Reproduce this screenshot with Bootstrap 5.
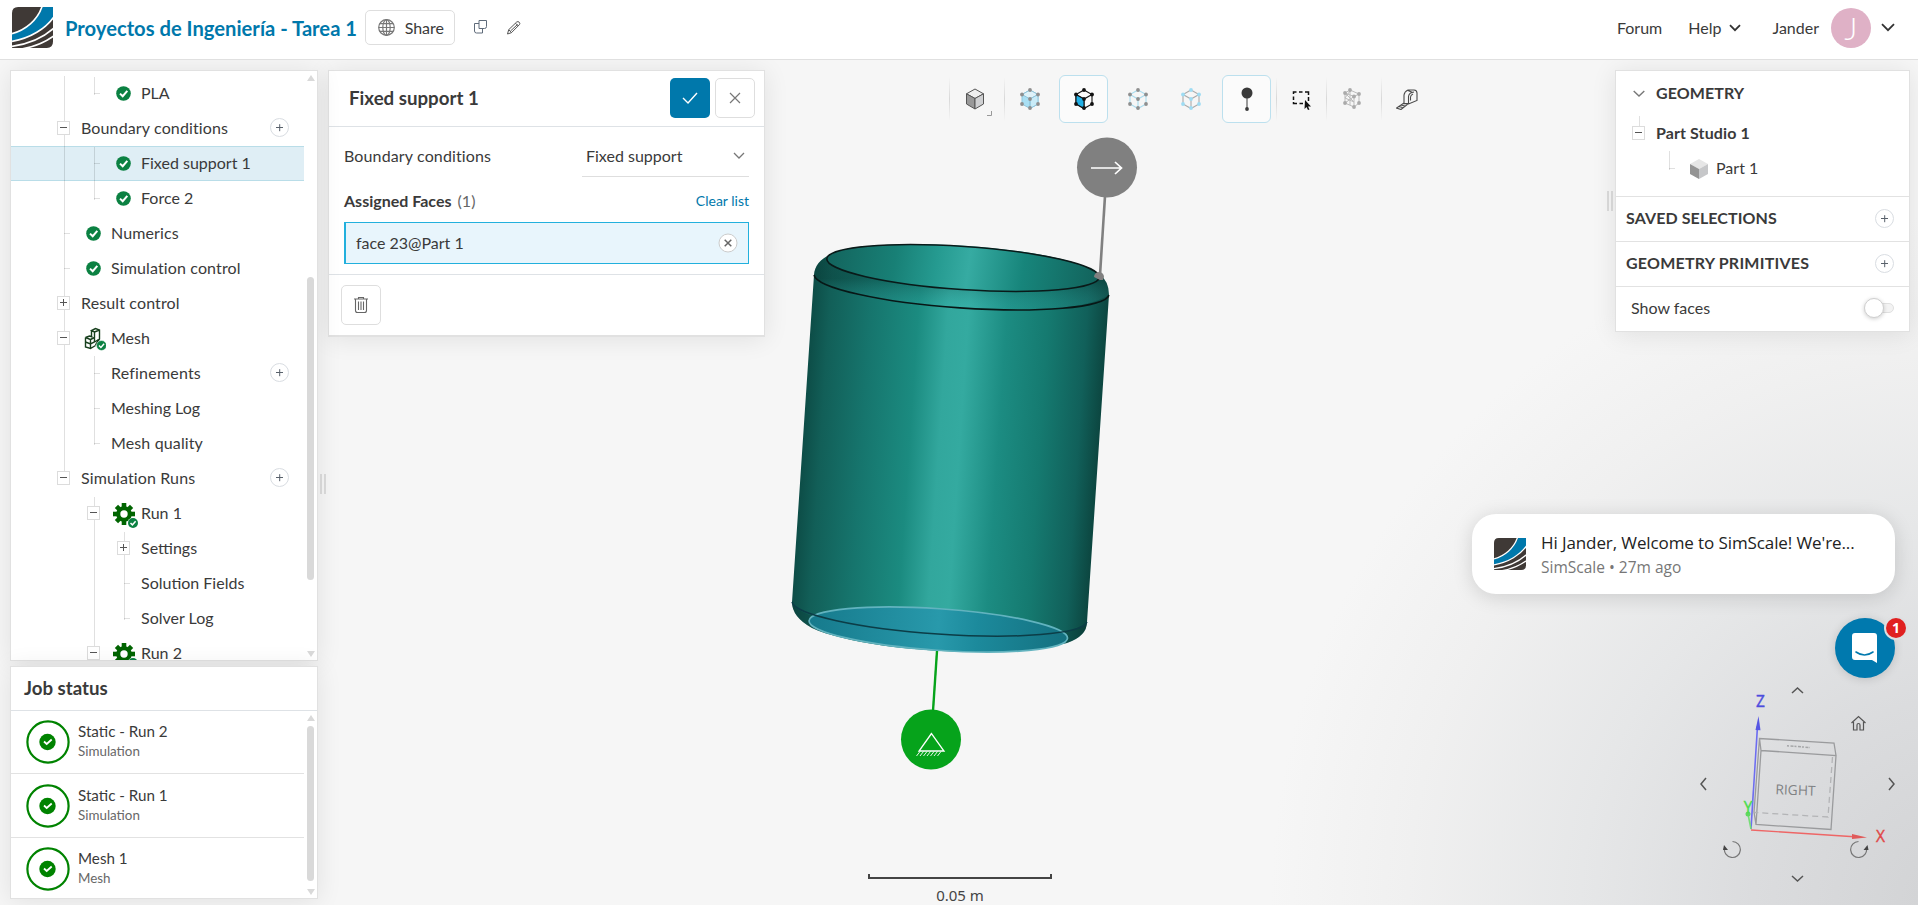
<!DOCTYPE html>
<html lang="es">
<head>
<meta charset="utf-8">
<meta name="viewport" content="width=device-width, initial-scale=1">
<title>Proyectos de Ingeniería - Tarea 1</title>
<link href="https://cdn.jsdelivr.net/npm/bootstrap@5.3.0/dist/css/bootstrap.min.css" rel="stylesheet">
<style>
:root{--ink:#3a3a3a;--line:#e2e2e2;--brand:#0078ab;--ok:#0b8142}
html,body{height:100%;overflow:hidden}
body{font-family:Lato,"Liberation Sans",sans-serif;font-size:16px;line-height:20px;color:var(--ink);background:#f6f6f6}
svg{display:block;flex:none}
.topbar{height:60px;border-bottom:1px solid #e0e0e0;background:#fff;padding:0 18px 4px 12px;position:relative;z-index:2}
.proj{font-size:20.2px;font-weight:700;color:var(--brand);margin-left:12px;width:289px;white-space:nowrap}
.btn-line{border:1px solid #dedede;border-radius:5px;background:#fff;color:var(--ink)}
.share{width:90px;height:35px;margin-left:11px;padding:0 10px 0 12px;font-size:16px}
.avatar{width:40px;height:40px;background:#dfb1c6;color:#fff;font-size:32px;font-weight:300}
.work{height:845px;padding:10px 8px 6px 10px;position:relative;isolation:isolate}
.scene{position:absolute;inset:0;z-index:-1}
.panel{background:#fff;border:1px solid #e1e1e1;box-shadow:0 2px 24px rgba(0,0,0,.09)}
.side{width:308px;gap:5px}
.tree{height:591px;overflow:hidden;padding-top:5px;position:relative}
.jobs{height:233px;position:relative}
.trow{height:35px;width:293px;padding-left:39px}
.trow.sel{background:#dfeef5;box-shadow:inset 0 1px #b9dde8,inset 0 -1px #b9dde8}
.c{width:30px;height:35px;flex:none;position:relative;display:flex;align-items:center;justify-content:center}
.c.v::before,.c.t::before,.c.l::before,.c.u::before{content:"";position:absolute;left:14px;top:0;bottom:0;width:1px;background:rgba(0,0,0,.12)}
.c.l::before{bottom:16px}.c.u::before{bottom:17px}
.c.first::before{top:1px}
.c.t::after,.c.l::after{content:"";position:absolute;left:14px;top:17px;width:6px;height:1px;background:rgba(0,0,0,.12)}
.c.ic{padding:0 4px 1px 0}
.tg{width:13px;height:14px;border:1px solid #dcdcdc;background:#fff;position:relative;margin:-1px 0 0 -3px;display:block}
.tg::before,.tg.plus::after{content:"";position:absolute;left:2px;top:5px;width:7px;height:1px;background:#555}
.tg.plus::after{transform:rotate(90deg)}
.gr{padding:4px 0 0 3px}
.lbl{padding:0 0 2px 1px;white-space:nowrap}
.wide{letter-spacing:.13px}
.add{width:19px;height:19px;border:1px solid #d9dde2;border-radius:50%;background:#fff;position:relative;flex:none}
.add::before,.add::after{content:"";position:absolute;left:5px;top:8px;width:7px;height:1.4px;background:#59616b}
.add::after{transform:rotate(90deg)}
.trow .add{margin:-2px 15px 0 auto}
.bar{position:absolute;width:7px;border-radius:4px;background:#d9d9d9;right:3px}
.arr{position:absolute;right:2px;border:4.5px solid transparent;width:0;height:0}
.arr.up{border-bottom:6px solid #d9d9d9;border-top:0}.arr.dn{border-top:6px solid #d9d9d9;border-bottom:0}
.grip{width:6px;height:20px;border:solid #dcdcdc;border-width:0 2px}
.h-panel{font-size:18.7px;font-weight:700}
.job{width:293px;height:64px;border-bottom:1px solid var(--line);padding-left:15px}
.job b{font-weight:400;display:block;font-size:15.2px;line-height:19px;margin-top:-1px}
.job small{display:block;font-size:13.4px;line-height:20px;color:#686868}
.props{width:437px;margin-left:2px;height:267px;border-bottom-width:2px}
.sq{width:40px;height:40px;padding:0;display:flex;align-items:center;justify-content:center}
.btn-go{background:var(--brand);border-radius:5px}
.face{height:42px;border:1px solid #22b0dd;border-left-width:2px;background:#e8f5fc;padding:0 10px 1px;font-size:16px}
.pick{width:167px;height:39px;border-bottom:1px solid #dedede;padding:0 4px 3px}
.tools{height:48px;margin-top:5px}
.tool{width:49px;height:48px;display:flex;align-items:center;justify-content:center;flex:none}
.tool.on{border:1px solid #bce0ee;border-radius:6px;background:#fbfbfb}
.sep{width:1px;height:44px;flex:none;background:linear-gradient(transparent,#d8d8d8 50%,transparent)}
.geo{width:295px;height:262px}
.geo .hd{font-weight:700;font-size:16px;letter-spacing:.1px}
.sect{height:45px;border-top:1px solid var(--line);padding:0 15px 2px 10px}
.toastbox{position:absolute;left:1472px;top:454px;width:423px;height:80px;border-radius:24px;background:#fff;box-shadow:0 3px 20px rgba(0,0,0,.14);padding-left:22px;font-family:"Open Sans","Noto Sans",sans-serif}
.toastbox .m1{font-size:17px;letter-spacing:-.1px;color:#222;line-height:24px;white-space:nowrap}
.toastbox .m2{font-size:15.5px;color:#777;line-height:25px}
.chat{position:absolute;left:1835px;top:558px;width:60px;height:60px;border-radius:50%;background:#0079ae;box-shadow:0 1px 10px rgba(0,0,0,.15)}
.chat span{position:absolute;left:51px;top:0;width:20px;height:20px;border-radius:50%;background:#e02020;color:#fff;font:700 14px/20px "Open Sans",sans-serif;text-align:center;box-shadow:0 0 0 2px #dedfe1}
.sw{width:30px;height:20px;position:relative}
.sw::before{content:"";position:absolute;left:10px;top:5px;width:20px;height:10px;border-radius:5px;background:#f3f3f3;border:1px solid #e0e0e0}
.sw::after{content:"";position:absolute;left:0;top:0;width:20px;height:20px;border-radius:50%;background:#fff;border:1px solid #cfcfcf;box-shadow:0 1px 4px rgba(0,0,0,.2)}
</style>
</head>
<body>
<svg width="0" height="0" class="position-absolute">
<defs>
<symbol id="logo" viewBox="0 0 40 40">
<clipPath id="lc"><path d="M6 0H40V34Q40 40 34 40H0V6Q0 0 6 0Z"/></clipPath>
<g clip-path="url(#lc)"><rect width="40" height="40" fill="#3f3936"/>
<path d="M0 26.5C13 23 25 13 30 0H40V11C32 21 18 30 0 33.5Z" fill="#0078ab"/>
<path d="M0 26C13 22.500 25 13 29.500-1M0 33.500C18 30.500 33 21 41 9.500M-1 38.500C16 36.500 31 29.500 41 20.500M9 41C21 39 32 34.500 41 28" fill="none" stroke="#fff" stroke-width="1.600"/></g>
</symbol>
<symbol id="ok" viewBox="0 0 15 15"><circle cx="7.500" cy="7.500" r="7.300" fill="#0b8142"/><path d="M4 7.600 6.700 10.200 11.300 4.900" fill="none" stroke="#fff" stroke-width="2"/></symbol>
<symbol id="gear" viewBox="0 0 28 26"><g fill="#006400"><circle cx="11" cy="11" r="7.800"/><rect x="8.700" y="0" width="4.600" height="22"/><rect x="0" y="8.700" width="22" height="4.600"/><g transform="rotate(45 11 11)"><rect x="8.700" y=".3" width="4.600" height="21.400"/><rect x=".3" y="8.700" width="21.400" height="4.600"/></g></g><circle cx="11" cy="11" r="3.700" fill="#fff"/><circle cx="20" cy="20" r="5.400" fill="#fff"/><circle cx="20" cy="20" r="5" fill="#0b8142"/><path d="m17.500 20 1.900 1.900 3.200-3.700" fill="none" stroke="#fff" stroke-width="1.500"/></symbol>
<symbol id="job" viewBox="0 0 44 44"><circle cx="22" cy="22" r="20.600" fill="none" stroke="#008300" stroke-width="2.200"/><circle cx="21.500" cy="22" r="8.200" fill="#008300"/><path d="m18 21.500 2.700 2.500 5-4.500" fill="none" stroke="#fff" stroke-width="1.800"/></symbol>
</defs></svg>

<nav class="topbar d-flex align-items-center">
  <svg width="41" height="41"><use href="#logo"/></svg>
  <div class="proj">Proyectos de Ingeniería - Tarea 1</div>
  <button class="btn-line share d-flex align-items-center justify-content-between">
    <svg width="17" height="17" viewBox="0 0 17 17" fill="none" stroke="#777" stroke-width="1.200"><circle cx="8.500" cy="8.500" r="7.800"/><ellipse cx="8.500" cy="8.500" rx="3.700" ry="7.800"/><path d="M8.500.7v15.600M.7 8.500h15.600M1.800 4.700h13.400M1.800 12.300h13.400"/></svg>Share</button>
  <svg class="ms-3" style="margin-top:-1px" width="18" height="16" viewBox="0 0 18 16" fill="#fff" stroke="#5f6b7a"><path d="M3.500 4.500h8v9.500h-6q-2 0-2-2z"/><path d="M8 1.500h7.500v6q0 2-2 2H8z" /></svg>
  <svg style="margin-left:17px" width="16" height="16" viewBox="0 0 16 16" fill="none" stroke="#555"><path d="m1.500 14 1.200-4.300 8-7.700q1.300-1 2.500.2t.2 2.500l-8 8zM2.800 9.700l2.700 3M9.500 3.200l2.700 2.700M4.500 11l7-6.500"/></svg>
  <div class="ms-auto d-flex align-items-center">
    <span>Forum</span>
    <span style="margin-left:26px">Help</span>
    <svg style="margin-left:8px" width="12" height="8" viewBox="0 0 12 8" fill="none" stroke="#333" stroke-width="1.800"><path d="m1 1.200 5 5 5-5"/></svg>
    <span style="margin-left:31px">Jander</span>
    <div class="avatar rounded-circle d-flex align-items-center justify-content-center" style="margin-left:12px">J</div>
    <svg style="margin:0 5px 0 10px" width="14" height="9" viewBox="0 0 14 9" fill="none" stroke="#333" stroke-width="1.800"><path d="m1 1.200 6 6 6-6"/></svg>
  </div>
</nav>

<main class="work d-flex align-items-start">
  <!-- 3D viewer: model, pins, ruler and orientation cube -->
  <svg class="scene" width="1918" height="845" viewBox="0 60 1918 845">
    <defs>
      <radialGradient id="bg" gradientUnits="userSpaceOnUse" cx="1960" cy="905" r="690">
        <stop offset="0" stop-color="#d1d2d4"/><stop offset=".3" stop-color="#dbdcde"/><stop offset=".55" stop-color="#e6e7e8"/><stop offset=".8" stop-color="#f0f0f0"/><stop offset="1" stop-color="#f6f6f6"/></radialGradient>
      <linearGradient id="body" gradientUnits="userSpaceOnUse" x1="803" y1="438" x2="1098" y2="458">
        <stop offset="0" stop-color="#0d4d47"/><stop offset=".06" stop-color="#125f58"/><stop offset=".2" stop-color="#16756d"/><stop offset=".36" stop-color="#1b8b80"/><stop offset=".46" stop-color="#32a79d"/><stop offset=".53" stop-color="#34aaa0"/><stop offset=".66" stop-color="#1c8c82"/><stop offset=".8" stop-color="#157a70"/><stop offset=".93" stop-color="#11605a"/><stop offset="1" stop-color="#0c4640"/></linearGradient>
      <linearGradient id="in" gradientUnits="userSpaceOnUse" x1="827" y1="258" x2="1099" y2="277">
        <stop offset="0" stop-color="#13645d"/><stop offset=".25" stop-color="#188076"/><stop offset=".4" stop-color="#259a90"/><stop offset=".52" stop-color="#36aba2"/><stop offset=".72" stop-color="#17857b"/><stop offset="1" stop-color="#12625b"/></linearGradient>
      <linearGradient id="shade" x1="0" y1="0" x2="0" y2="1"><stop offset="0" stop-color="#06302c" stop-opacity=".25"/><stop offset=".5" stop-color="#06302c" stop-opacity=".3"/><stop offset=".95" stop-color="#4cc" stop-opacity=".14"/></linearGradient>
      <linearGradient id="face" x1="0" y1="0" x2="1" y2="0"><stop offset="0" stop-color="#167a8c"/><stop offset=".5" stop-color="#2899ab"/><stop offset=".65" stop-color="#1c8a9c"/><stop offset="1" stop-color="#14707f"/></linearGradient>
    </defs>
    <rect y="60" width="1918" height="845" fill="url(#bg)"/>
    <path d="M814 275C815 260 830 250 863 246.500C950 238 1078 254 1099 274Q1109 281 1109 295L1087 622Q1087 636 1067 643C1000 661 860 650 812 628Q792 617 792 602Z" fill="url(#body)"/>
    <path d="M814 275C815 260 830 250 863 246.500L1099 274Q1109 281 1109 295C1080 313 1000 313 940 307C870 301 818 288 814 275Z" fill="url(#shade)"/>
    <path d="M792 602C796 622 900 636 990 637Q1070 638 1087 622Q1087 636 1067 643C1000 661 860 650 812 628Q792 617 792 602Z" fill="#06302c" opacity=".3"/>
    <ellipse cx="963" cy="268" rx="136.500" ry="21.600" transform="rotate(3.900 963 268)" fill="url(#in)" stroke="#0a1a19" stroke-width="1.600"/>
    <path d="M0 0A148 24 0 0 0 295.700 0" transform="translate(814 275) rotate(3.900)" fill="none" stroke="#081716" stroke-width="1.600"/>
    <ellipse cx="938.300" cy="629.500" rx="129.500" ry="20.800" transform="rotate(3.900 938.300 629.500)" fill="url(#face)" stroke="#62b3bf" stroke-width="1.700"/>
    <path d="M0 0A148 23 0 0 0 295.700 0" transform="translate(792 602) rotate(3.900)" fill="none" stroke="#0c3d47" stroke-width="1.500"/>
    <path d="M1105 196 1100 275" stroke="#808080" stroke-width="2.600"/><circle cx="1107" cy="167.500" r="30" fill="#808080"/><path d="M1094 277a5 5 0 0 1 10 0l-1 3h-3z" fill="#808080"/>
    <path d="M1091 168h30m-6-6 6.500 6-6.500 6" fill="none" stroke="#fff" stroke-width="1.700"/>
    <path d="M937 651 933 711" stroke="#06a31b" stroke-width="2.400"/><circle cx="931" cy="739.500" r="30" fill="#06a31b"/>
    <path d="m931.500 733.500-12.500 17.500h25z" fill="none" stroke="#fff" stroke-width="1.300"/><path d="m920 751.500-3.500 4.500m7-4.500-3.500 4.500m7-4.500-3.500 4.500m7-4.500-3.500 4.500m7-4.500-3.500 4.500m7-4.500-3.500 4.500m7-4.500-3.500 4.500" stroke="#fff" stroke-width=".9"/>
    <path d="M869 874v4h182v-4" fill="none" stroke="#444" stroke-width="2"/>
    <text x="960" y="901" text-anchor="middle" font-family="Noto Sans" font-size="15" fill="#444">0.05 m</text>
    <!-- orientation cube -->
    <g fill="none" stroke="#9a9b9d" stroke-width="1.300">
      <path d="M1761 750.500 1836 755.500 1831 829.500 1756 824.500ZM1761 750.500 1759.500 738.500 1834 743 1836 755.500M1759.500 738.500 1754 812 1756 824.500"/>
      <path d="M1832.500 757 1828 817 1755 812.500" stroke="#b3b4b6" stroke-dasharray="6 4"/></g>
    <path d="M1751 829 1757.500 726" stroke="#6d6df0" stroke-width="1.600"/><path d="m1758.500 716-3 14 5 .3z" fill="#5656e4"/>
    <path d="M1751 830 1858 837" stroke="#e66" stroke-width="1.400"/><path d="m1867 837.500-15-3.400v5z" fill="#e05a5a"/>
    <path d="m1751 829-3-15" stroke="#7d7" stroke-width="1.600"/><circle cx="1748" cy="814" r="2.500" fill="#5fd85f"/>
    <path d="M1787 745.800 1810 747.500" stroke="#a5a6a8" stroke-width="1.500" stroke-dasharray="2 1.500 3 1"/>
    <g font-family="Open Sans" text-anchor="middle"><text x="1795.500" y="795" font-size="13.800" fill="#808284" transform="rotate(2 1795 790)">RIGHT</text>
    <g font-size="15.500" stroke-width=".4"><text x="1760.500" y="707" fill="#4d4ddd" stroke="#4d4ddd">Z</text><text x="1880.500" y="842" fill="#e04848" stroke="#e04848">X</text><text x="1748" y="813" fill="#4bdc4b" stroke="#4bdc4b">Y</text></g></g>
    <g fill="none" stroke="#555" stroke-width="1.500"><path d="m1792 693 5.500-5 5.500 5M1792 876l5.500 5 5.500-5M1706 778l-5 6 5 6M1889 778l5 6-5 6"/>
    <path d="m1851.500 723 7-6.500 7 6.500M1853.500 722v8h3.500v-5q0-1.500 1.500-1.500t1.500 1.500v5h3.500v-8" stroke-width="1.200"/>
    <path d="M1732.500 841.500A8 8 0 1 1 1724.500 848M1858.500 841.500A8 8 0 1 0 1866.500 848" stroke-width="1.200" stroke="#777"/></g>
    <path d="m1723 850 1-5 4 5zM1868.500 850l-1-5-4 5z" fill="#444"/>
  </svg>

  <aside class="side d-flex flex-column">
    <section class="panel tree">
      <div class="trow d-flex align-items-center"><i class="c v"></i><i class="c l first"></i><i class="c ic"><svg width="15" height="15"><use href="#ok"/></svg></i><span class="lbl">PLA</span></div>
      <div class="trow d-flex align-items-center"><i class="c v"><b class="tg"></b></i><span class="lbl wide">Boundary conditions</span><i class="add"></i></div>
      <div class="trow sel d-flex align-items-center"><i class="c v"></i><i class="c t first"></i><i class="c ic"><svg width="15" height="15"><use href="#ok"/></svg></i><span class="lbl">Fixed support 1</span></div>
      <div class="trow d-flex align-items-center"><i class="c v"></i><i class="c l"></i><i class="c ic"><svg width="15" height="15"><use href="#ok"/></svg></i><span class="lbl">Force 2</span></div>
      <div class="trow d-flex align-items-center"><i class="c v t"></i><i class="c ic"><svg width="15" height="15"><use href="#ok"/></svg></i><span class="lbl wide">Numerics</span></div>
      <div class="trow d-flex align-items-center"><i class="c v t"></i><i class="c ic"><svg width="15" height="15"><use href="#ok"/></svg></i><span class="lbl wide">Simulation control</span></div>
      <div class="trow d-flex align-items-center"><i class="c v"><b class="tg plus"></b></i><span class="lbl wide">Result control</span></div>
      <div class="trow d-flex align-items-center"><i class="c v"><b class="tg"></b></i><i class="c"><svg width="22" height="24" viewBox="0 0 22 24" fill="none" stroke="#173f1d" stroke-width="1.400"><path d="M1.500 10.500v9.500l5 1.500 5-3M1.500 10.500l4-1.500 3 1M1.500 10.500l5 2v9M6.500 12.500l4-2V5l-3-1.500 4-2 4 1.500v9l-4 6M7.500 3.500V9M10.500 5l5-2M1.500 15l5 2 5-2.500 3-2M10.500 10v5"/><circle cx="17.500" cy="18.500" r="5" fill="#0b8142" stroke="#fff" stroke-width=".5"/><path d="m15 18.500 1.900 1.900 3.200-3.700" stroke="#fff"/></svg></i><span class="lbl">Mesh</span></div>
      <div class="trow d-flex align-items-center"><i class="c v"></i><i class="c t"></i><span class="lbl" style="letter-spacing:.2px">Refinements</span><i class="add"></i></div>
      <div class="trow d-flex align-items-center"><i class="c v"></i><i class="c t"></i><span class="lbl">Meshing Log</span></div>
      <div class="trow d-flex align-items-center"><i class="c v"></i><i class="c l"></i><span class="lbl wide">Mesh quality</span></div>
      <div class="trow d-flex align-items-center"><i class="c u"><b class="tg"></b></i><span class="lbl wide">Simulation Runs</span><i class="add"></i></div>
      <div class="trow d-flex align-items-center"><i class="c"></i><i class="c v first"><b class="tg"></b></i><i class="c gr"><svg width="28" height="26"><use href="#gear"/></svg></i><span class="lbl">Run 1</span></div>
      <div class="trow d-flex align-items-center"><i class="c"></i><i class="c v"></i><i class="c v first"><b class="tg plus"></b></i><span class="lbl">Settings</span></div>
      <div class="trow d-flex align-items-center"><i class="c"></i><i class="c v"></i><i class="c t"></i><span class="lbl">Solution Fields</span></div>
      <div class="trow d-flex align-items-center"><i class="c"></i><i class="c v"></i><i class="c l"></i><span class="lbl">Solver Log</span></div>
      <div class="trow d-flex align-items-center"><i class="c"></i><i class="c u"><b class="tg"></b></i><i class="c gr"><svg width="28" height="26"><use href="#gear"/></svg></i><span class="lbl">Run 2</span></div>
      <i class="arr up" style="top:4px"></i><i class="bar" style="top:206px;height:303px"></i><i class="arr dn" style="top:580px"></i>
    </section>
    <section class="panel jobs">
      <div class="h-panel d-flex align-items-center border-bottom" style="height:44px;padding:0 0 1px 13px">Job status</div>
      <div class="job d-flex align-items-center" style="height:63px"><svg width="44" height="44"><use href="#job"/></svg><div class="ps-2"><b>Static - Run 2</b><small>Simulation</small></div></div>
      <div class="job d-flex align-items-center"><svg width="44" height="44"><use href="#job"/></svg><div class="ps-2"><b>Static - Run 1</b><small>Simulation</small></div></div>
      <div class="job d-flex align-items-center border-0" style="height:62px"><svg width="44" height="44"><use href="#job"/></svg><div class="ps-2"><b>Mesh 1</b><small>Mesh</small></div></div>
      <i class="arr up" style="top:48px"></i><i class="bar" style="top:59px;height:155px"></i><i class="arr dn" style="top:222px"></i>
    </section>
  </aside>
  <div class="grip" style="margin:404px 0 0 2px"></div>

  <section class="panel props">
    <div class="d-flex align-items-center border-bottom" style="height:56px;padding:0 9px 1px 20px">
      <span class="h-panel me-auto">Fixed support 1</span>
      <button class="btn-line btn-go sq border-0"><svg width="16" height="12" viewBox="0 0 16 12" fill="none" stroke="#fff" stroke-width="1.400"><path d="m1 6 5 5 9-10"/></svg></button>
      <button class="btn-line sq" style="margin-left:5px"><svg width="12" height="12" viewBox="0 0 12 12" stroke="#777" stroke-width="1.200"><path d="m1 1 10 10M11 1 1 11"/></svg></button>
    </div>
    <div style="padding:11px 15px 0;height:147px">
      <div class="d-flex align-items-center justify-content-between"><span class="wide pb-1">Boundary conditions</span>
        <div class="pick d-flex align-items-center justify-content-between"><span>Fixed support</span><svg width="12" height="8" viewBox="0 0 12 8" fill="none" stroke="#777" stroke-width="1.300"><path d="m1 1 5 5 5-5"/></svg></div></div>
      <div class="d-flex align-items-center justify-content-between" style="height:50px;padding-bottom:2px"><span><b>Assigned Faces</b> <span style="color:#666;margin-left:2px">(1)</span></span><span style="font-size:14px;color:#0078ab">Clear list</span></div>
      <div class="face d-flex align-items-center justify-content-between" style="margin-top:-5px"><span>face 23@Part 1</span>
        <svg width="20" height="20" viewBox="0 0 20 20" fill="#fff" stroke="#ccc"><circle cx="10" cy="10" r="9"/><path d="m6.700 6.700 6.600 6.600m0-6.600-6.600 6.600" stroke="#666" stroke-width="1.500"/></svg></div>
    </div>
    <div class="border-top" style="padding:10px 12px">
      <button class="btn-line sq"><svg width="16" height="18" viewBox="0 0 16 18" fill="none" stroke="#666" stroke-width="1.100"><path d="M1 3h14M5.500 3V1.500h5V3M2.500 3v11.500q0 2 2 2h7q2 0 2-2V3M5.500 5.500v8.500M8 5.500v8.500M10.500 5.500v8.500"/></svg></button>
    </div>
  </section>

  <div class="tools d-flex align-items-center" style="margin-left:184px">
    <i class="sep"></i>
    <div class="tool position-relative"><svg width="20" height="22" viewBox="0 0 20 22" stroke="#555" stroke-linejoin="round"><path d="m10 1 8.500 4.800L10 10.500 1.500 5.800z" fill="#eee"/><path d="M1.500 5.800 10 10.500V21l-8.500-5z" fill="#999"/><path d="M18.500 5.800 10 10.500V21l8.500-5z" fill="#cfd0d2"/></svg><svg class="position-absolute" style="right:7px;bottom:7px" width="5" height="5" viewBox="0 0 5 5" fill="none" stroke="#999"><path d="M0 4.500h4.500V0"/></svg></div>
    <i class="sep" style="margin-left:5px"></i>
    <div class="tool"><svg width="20" height="22" viewBox="0 0 20 22" stroke="#8fc6dc"><path d="M10 2 18 6.500V16L10 20.500 2 16V6.500z" fill="#a9dff3"/><path d="m10 2 8 4.500-8 4.500-8-4.500z" fill="#dff2f9"/><path d="M10 11 18 6.500V16L10 20.500z" fill="#c9ebf7"/><path d="M10 11v9.500" fill="none"/><g fill="#8f8f8f" stroke="none"><circle cx="10" cy="2" r="1.900"/><circle cx="18" cy="6.500" r="1.900"/><circle cx="18" cy="16" r="1.900"/><circle cx="10" cy="20" r="1.900"/><circle cx="2" cy="16" r="1.900"/><circle cx="2" cy="6.500" r="1.900"/><circle cx="10" cy="11" r="1.900"/></g></svg></div>
    <div class="tool on" style="margin-left:5px"><svg width="20" height="22" viewBox="0 0 20 22" fill="none" stroke="#111" stroke-width="1.100"><path d="M10 2 18 6.500V16L10 20.500 2 16V6.500zM2 6.500l8 4.500 8-4.500M10 11v9.500"/><path d="M2 6.500 10 11v9.500L2 16z" fill="#22b0e6"/><g fill="#111" stroke="none"><circle cx="10" cy="2" r="1.900"/><circle cx="18" cy="6.500" r="1.900"/><circle cx="18" cy="16" r="1.900"/><circle cx="10" cy="20" r="1.900"/><circle cx="2" cy="16" r="1.900"/><circle cx="2" cy="6.500" r="1.900"/><circle cx="10" cy="11" r="1.900"/></g></svg></div>
    <div class="tool" style="margin-left:5px"><svg width="20" height="22" viewBox="0 0 20 22" fill="none" stroke="#a8dcef" stroke-width="1.100"><path d="M10 2 18 6.500V16L10 20.500 2 16V6.500zM2 6.500l8 4.500 8-4.500M10 11v9.500"/><g fill="#8f8f8f" stroke="none"><circle cx="10" cy="2" r="1.900"/><circle cx="18" cy="6.500" r="1.900"/><circle cx="18" cy="16" r="1.900"/><circle cx="10" cy="20" r="1.900"/><circle cx="2" cy="16" r="1.900"/><circle cx="2" cy="6.500" r="1.900"/><circle cx="10" cy="11" r="1.900"/></g></svg></div>
    <div class="tool" style="margin-left:4px"><svg width="20" height="22" viewBox="0 0 20 22" fill="none" stroke="#aaa" stroke-width="1.100"><path d="M10 2 18 6.500V16L10 20.500 2 16V6.500zM2 6.500l8 4.500 8-4.500M10 11v9.500"/><g fill="#9edcf3" stroke="none"><circle cx="10" cy="2" r="1.900"/><circle cx="18" cy="6.500" r="1.900"/><circle cx="18" cy="16" r="1.900"/><circle cx="10" cy="20" r="1.900"/><circle cx="2" cy="16" r="1.900"/><circle cx="2" cy="6.500" r="1.900"/><circle cx="10" cy="11" r="1.900"/></g></svg></div>
    <div class="tool on" style="margin-left:7px"><svg width="12" height="24" viewBox="0 0 12 24" fill="#3a3a3a"><circle cx="6" cy="6" r="5.500"/><path d="M5.500 6h1v16h-1z"/><circle cx="6" cy="22" r="1.900"/></svg></div>
    <i class="sep" style="margin-left:5px"></i>
    <div class="tool"><svg width="20" height="22" viewBox="0 0 20 22" fill="none" stroke="#111"><path d="M1.500 6V4h3M7 4h3.500M13 4h3.500v3M1.500 8.500V12M16.500 9v4M1.500 14v1.500H5M7.500 15.500H11" stroke-width="1.500"/><path d="m13 12 6 6.500h-3l1.500 3-1.500.5-1.500-3-2 2z" fill="#111" stroke="none"/></svg></div>
    <i class="sep"></i>
    <div class="tool"><svg width="20" height="22" viewBox="0 0 20 22" fill="none" stroke="#bbb"><path d="M3 5 8 2l9 4v9l-5 4-9-4zM3 5l9 3.500L17 6M12 8.500V19M8 2v15M3 10l9 4M3 5l9 9M12 8.500 3 15M3 10l5-7"/><g fill="#aaa" stroke="none"><circle cx="3" cy="5" r="1.900"/><circle cx="8" cy="2" r="1.900"/><circle cx="17" cy="6" r="1.900"/><circle cx="17" cy="15" r="1.900"/><circle cx="12" cy="19" r="1.900"/><circle cx="3" cy="15" r="1.900"/><circle cx="12" cy="8.500" r="1.900"/></g></svg></div>
    <i class="sep" style="margin-left:5px"></i>
    <div class="tool"><svg width="22" height="22" viewBox="0 0 22 22" fill="none" stroke="#4a4a4a" stroke-width="1.100"><path d="M8 15.500V7q.5-3.500 4-5h6q3 .3 3 3v7.500l-8.500 3.500zM12.500 16V8.500q.5-4 5.500-4.500M8 15.500h4.500L5 21.500.5 20l7.500-5M14.500 12.500v-3.500q.3-2 2.500-3M3 18.500l3.500 1M5 17l4 1M12 2.500l4 1.800"/></svg></div>
  </div>

  <div class="grip ms-auto" style="margin:121px 2px 0 0"></div>
  <aside class="panel geo">
    <div style="height:125px;padding-top:11px">
      <div class="d-flex align-items-center hd" style="height:23px;padding-left:17px"><svg width="12" height="8" viewBox="0 0 12 8" fill="none" stroke="#777" stroke-width="1.400"><path d="m.7 1 5.300 5 5.300-5"/></svg><span style="margin-left:11px;padding-bottom:1px">GEOMETRY</span></div>
      <div class="d-flex align-items-center hd" style="height:35px;padding-left:9px;margin-top:11px"><i class="c u"><b class="tg"></b></i><span class="lbl">Part Studio 1</span></div>
      <div class="d-flex align-items-center" style="height:35px;padding-left:39px"><i class="c l"></i><i class="c" style="padding-right:3px"><svg width="18" height="20" viewBox="0 0 18 20"><path d="m9 0 9 5-9 5-9-5z" fill="#e6e6e6"/><path d="m0 5 9 5v10l-9-5z" fill="#949494"/><path d="m18 5-9 5v10l9-5z" fill="#c6c7c9"/></svg></i><span class="lbl">Part 1</span></div>
    </div>
    <div class="sect hd d-flex align-items-center justify-content-between">SAVED SELECTIONS<i class="add"></i></div>
    <div class="sect hd d-flex align-items-center justify-content-between" style="letter-spacing:.22px">GEOMETRY PRIMITIVES<i class="add"></i></div>
    <div class="sect d-flex align-items-center justify-content-between" style="padding-left:15px">Show faces<i class="sw"></i></div>
  </aside>

  <div class="toastbox d-flex align-items-center">
    <svg width="32" height="32"><use href="#logo"/></svg>
    <div style="margin-left:15px;padding-top:3px"><div class="m1">Hi Jander, Welcome to SimScale! We're...</div><div class="m2">SimScale • 27m ago</div></div>
  </div>
  <div class="chat d-flex align-items-center justify-content-center"><svg width="28" height="32" viewBox="0 0 28 32"><path d="M4 1h19q3 0 3 3v27l-5-3H4q-3 0-3-3V4q0-3 3-3z" fill="#fff"/><path d="M5 20q8.500 6 17 0" fill="none" stroke="#0079ae" stroke-width="1.600" stroke-linecap="round"/></svg><span>1</span></div>
</main>
<script src="https://cdn.jsdelivr.net/npm/bootstrap@5.3.0/dist/js/bootstrap.bundle.min.js"></script>
</body>
</html>
